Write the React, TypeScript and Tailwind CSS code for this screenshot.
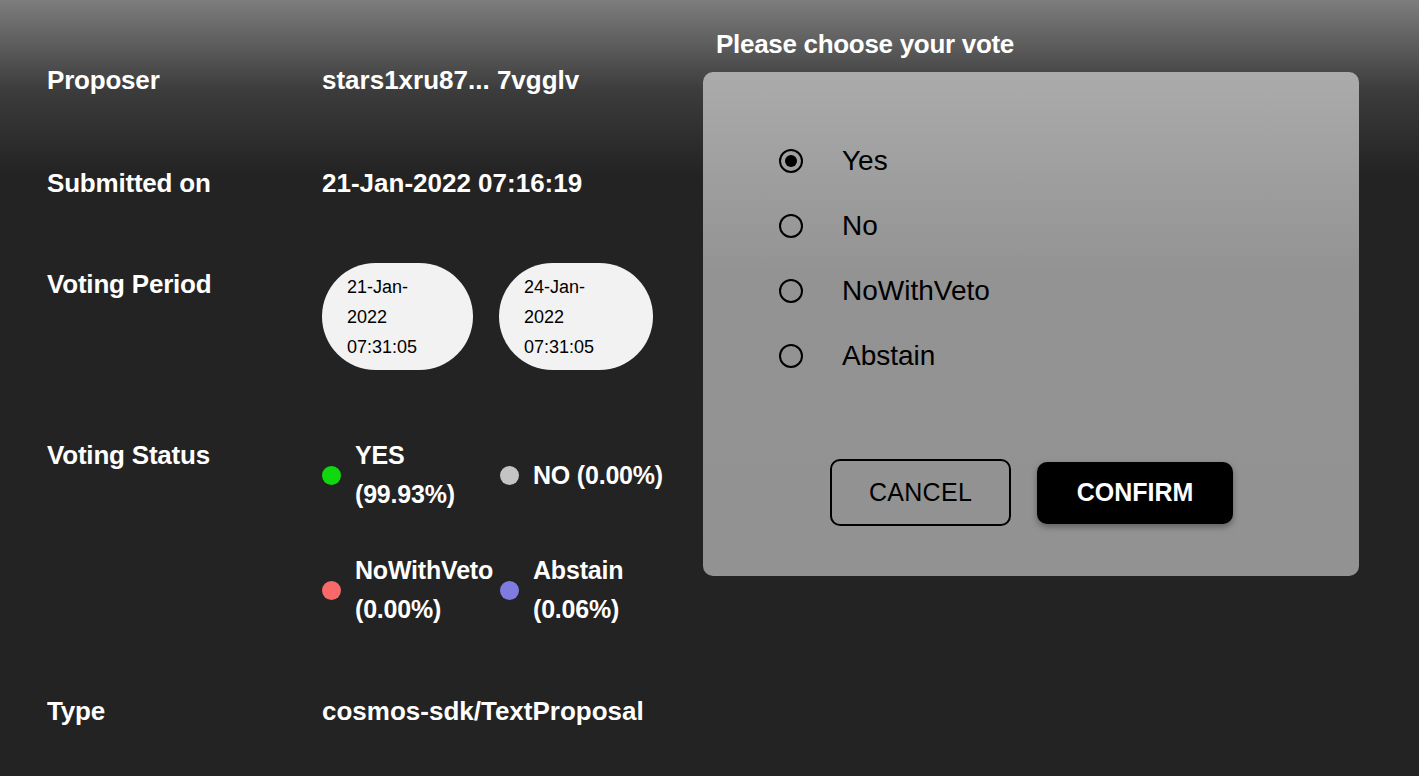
const font = { fontFamily: '"Liberation Sans", Arial, sans-serif' };

function Row({
  label,
  children,
  className = '',
  labelClass = '',
}: {
  label: string;
  children: React.ReactNode;
  className?: string;
  labelClass?: string;
}) {
  return (
    <div className={`flex ${className}`}>
      <div className={`w-[275px] shrink-0 text-[26px] font-bold leading-[32px] tracking-[-0.2px] text-white ${labelClass}`}>{label}</div>
      {children}
    </div>
  );
}

export default function App() {
  const status = [
    { color: 'bg-[#0fd80f]', lines: ['YES', '(99.93%)'] },
    { color: 'bg-[#c4c4c4]', lines: ['NO (0.00%)'] },
    { color: 'bg-[#f86a6a]', lines: ['NoWithVeto', '(0.00%)'] },
    { color: 'bg-[#7e7ce0]', lines: ['Abstain', '(0.06%)'] },
  ];
  const options = ['Yes', 'No', 'NoWithVeto', 'Abstain'];

  return (
    <div
      className="flex h-[776px] w-full overflow-hidden bg-[linear-gradient(180deg,#7c7d7c_0px,#3c3c3c_90px,#232323_175px)]"
      style={font}
    >
      {/* details */}
      <div className="w-[703px] shrink-0 pl-[47px] pt-[64px]">
        <Row label="Proposer">
          <div className="text-[26px] font-bold leading-[32px] text-white">stars1xru87... 7vgglv</div>
        </Row>
        <Row label="Submitted on" className="mt-[71px]">
          <div className="text-[26px] font-bold leading-[32px] text-white">21-Jan-2022 07:16:19</div>
        </Row>
        <Row label="Voting Period" className="mt-[64px]" labelClass="pt-[5px]">
          <div className="flex gap-[26px]">
            {['21-Jan-', '24-Jan-'].map((d, i) => (
              <div
                key={i}
                className={`flex h-[107px] flex-col justify-center rounded-full bg-[#f2f2f2] pl-[25px] text-[18px] leading-[30px] text-black ${i === 0 ? 'w-[151px]' : 'w-[154px]'}`}
              >
                <span>{d}</span>
                <span>2022</span>
                <span>07:31:05</span>
              </div>
            ))}
          </div>
        </Row>
        <Row label="Voting Status" className="mt-[69px]">
          <div className="-mt-[3px] grid grid-cols-[178px_178px] gap-y-[37px]">
            {status.map((s, i) => (
              <div key={i} className="flex h-[78px] items-center">
                <span className={`mr-[14px] h-[19px] w-[19px] shrink-0 rounded-full ${s.color}`} />
                <div className="whitespace-nowrap text-[25px] font-bold leading-[39px] tracking-[-0.2px] text-white">
                  {s.lines.map((l) => (
                    <div key={l}>{l}</div>
                  ))}
                </div>
              </div>
            ))}
          </div>
        </Row>
        <Row label="Type" className="mt-[66px]">
          <div className="text-[26px] font-bold leading-[32px] text-white">cosmos-sdk/TextProposal</div>
        </Row>
      </div>

      {/* vote */}
      <div className="pt-[28px]">
        <div className="pl-[13px] text-[26px] font-bold leading-[32px] tracking-[-0.3px] text-white">Please choose your vote</div>
        <div className="mt-[12px] h-[504px] w-[656px] rounded-[10px] bg-[linear-gradient(180deg,#ababab_0px,#939393_200px,#929292_504px)] pl-[76px] pt-[65px]">
          <div className="flex flex-col gap-[17px]">
            {options.map((o, i) => (
              <label key={o} className="flex h-[48px] items-center">
                <span className="flex h-[24px] w-[24px] items-center justify-center rounded-full border-2 border-black">
                  {i === 0 && <span className="h-[12px] w-[12px] rounded-full bg-black" />}
                </span>
                <span className="ml-[39px] text-[28px] leading-[32px] text-black">{o}</span>
              </label>
            ))}
          </div>
          <div className="ml-[51px] mt-[79px] flex items-center gap-[26px]">
            <button className="h-[67px] w-[181px] rounded-[10px] border-2 border-black text-[25px] tracking-[0.3px] text-black">
              CANCEL
            </button>
            <button className="h-[62px] w-[196px] rounded-[10px] bg-black text-[25px] font-bold text-white shadow-[0_3px_6px_rgba(0,0,0,0.35)]">
              CONFIRM
            </button>
          </div>
        </div>
      </div>
    </div>
  );
}
